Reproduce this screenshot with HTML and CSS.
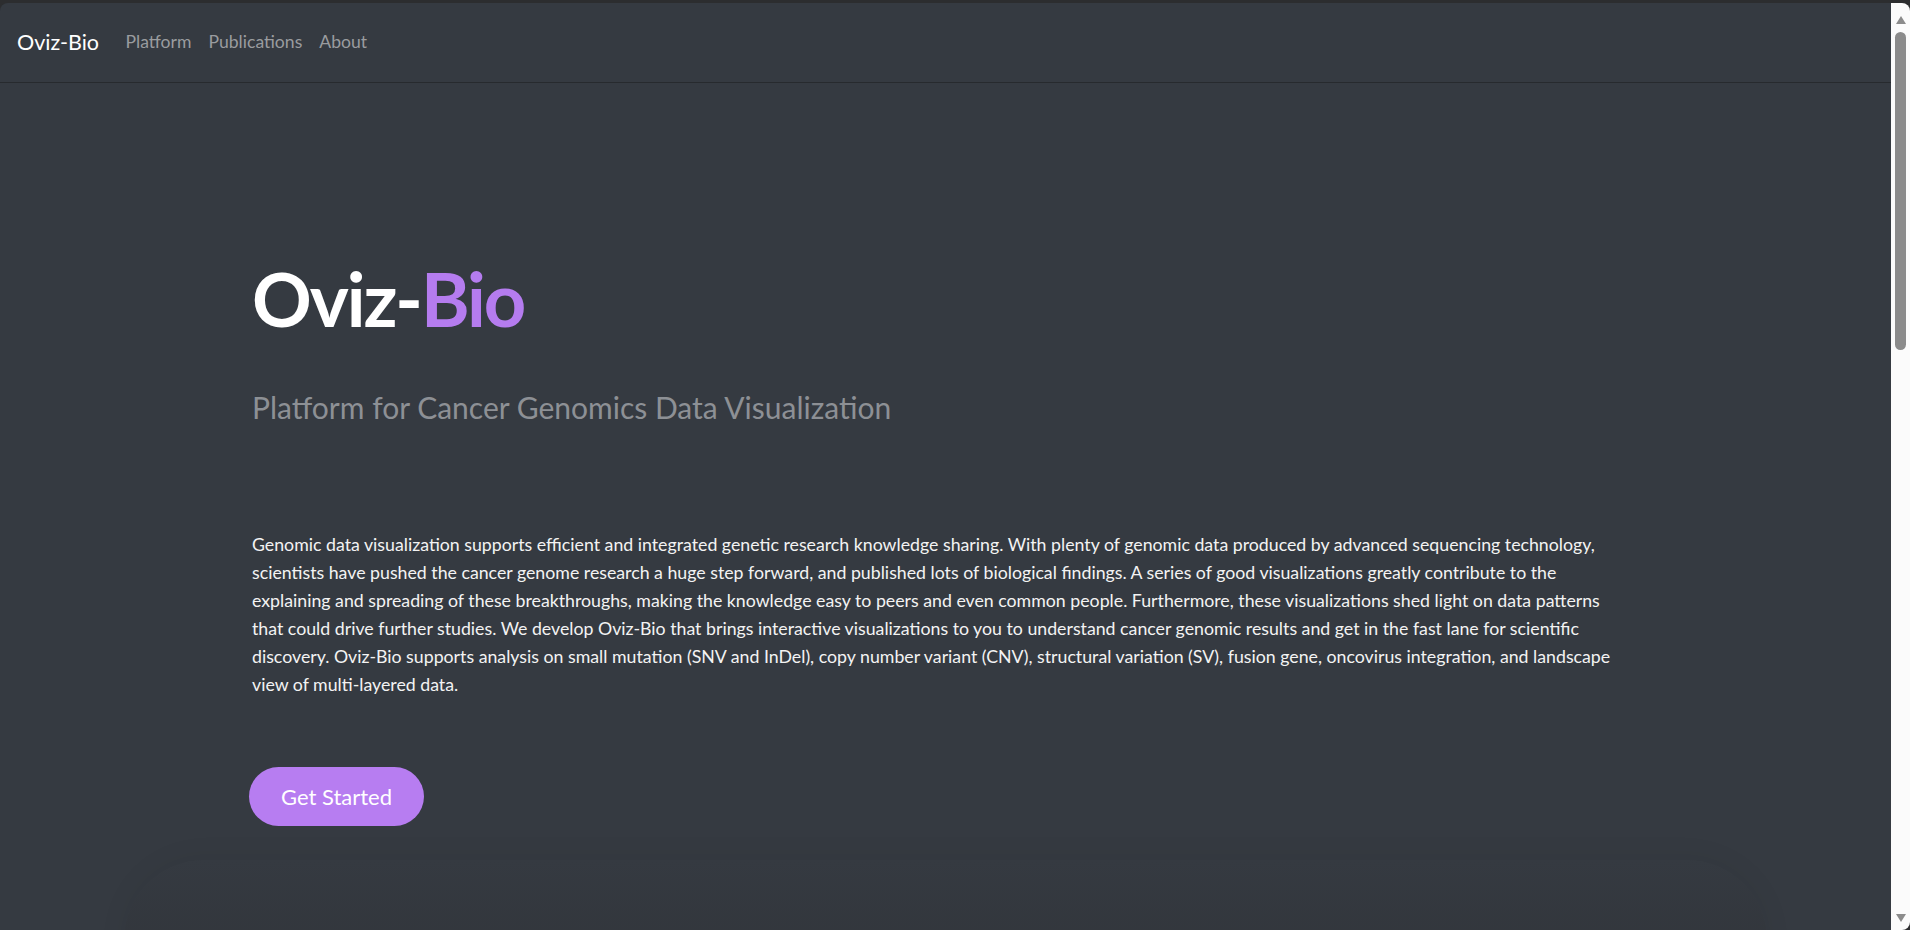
FILE: index.html
```html
<!DOCTYPE html>
<html lang="en">
<head>
<meta charset="utf-8">
<title>Oviz-Bio</title>
<link rel="stylesheet" href="styles.css">
</head>
<body>
<div class="window">
  <div class="main">
    <nav class="navbar">
      <a class="brand" href="#">Oviz-Bio</a>
      <ul class="nav-links">
        <li><a href="#">Platform</a></li>
        <li><a href="#">Publications</a></li>
        <li><a href="#">About</a></li>
      </ul>
    </nav>
    <section class="hero">
      <h1 class="hero-title">Oviz-<span class="accent">Bio</span></h1>
      <p class="hero-subtitle">Platform for Cancer Genomics Data Visualization</p>
      <p class="hero-text">Genomic data visualization supports efficient and integrated genetic research knowledge sharing. With plenty of genomic data produced by advanced sequencing technology, scientists have pushed the cancer genome research a huge step forward, and published lots of biological findings. A series of good visualizations greatly contribute to the explaining and spreading of these breakthroughs, making the knowledge easy to peers and even common people. Furthermore, these visualizations shed light on data patterns that could drive further studies. We develop Oviz-Bio that brings interactive visualizations to you to understand cancer genomic results and get in the fast lane for scientific discovery. Oviz-Bio supports analysis on small mutation (SNV and InDel), copy number variant (CNV), structural variation (SV), fusion gene, oncovirus integration, and landscape view of multi-layered data.</p>
      <a class="btn-start" href="#">Get Started</a>
    </section>
    <section class="next-card"></section>
  </div>
  <div class="scrollbar">
    <span class="arrow-up"></span>
    <span class="thumb"></span>
    <span class="track"></span>
    <span class="arrow-down"></span>
  </div>
</div>
</body>
</html>
```

FILE: styles.css
```css
* { box-sizing: border-box; }
html, body {
  margin: 0;
  padding: 0;
  height: 100%;
  overflow: hidden;
  background: #2c2d2f;
}
body {
  font-family: Lato, "Open Sans", "Liberation Sans", sans-serif;
}
.window {
  display: flex;
  height: calc(100vh - 3px);
  margin-top: 3px;
}
.main {
  flex: 1;
  background: #353a41;
  border-top-left-radius: 8px;
  overflow: hidden;
  display: flex;
  flex-direction: column;
}
.navbar {
  height: 80px;
  flex-shrink: 0;
  display: flex;
  align-items: center;
  padding: 0 0 2px 17px;
  border-bottom: 1px solid #272a2e;
}
.brand {
  color: #ffffff;
  font-size: 21.5px;
  text-decoration: none;
  margin-right: 18px;
}
.nav-links {
  display: flex;
  list-style: none;
  margin: 0;
  padding: 0;
}
.nav-links a {
  display: block;
  padding: 0 8.5px;
  color: #9a9c9f;
  font-size: 17.6px;
  text-decoration: none;
}
.hero {
  padding: 168px 0 0 252px;
  flex-shrink: 0;
  height: 777px;
}
.hero-title {
  margin: 0;
  font-size: 74px;
  line-height: 96px;
  font-weight: 700;
  color: #ffffff;
  letter-spacing: -2px;
}
.accent { color: #b57cef; }
.hero-subtitle {
  margin: 42px 0 0;
  font-size: 30px;
  line-height: 36px;
  color: #8d9095;
  font-weight: 400;
}
.hero-text {
  margin: 106px 0 0;
  max-width: 1375px;
  font-size: 17.74px;
  line-height: 27.9px;
  color: #f3f3f3;
}
.btn-start {
  display: inline-flex;
  align-items: center;
  justify-content: center;
  margin-top: 69px;
  margin-left: -3px;
  width: 175px;
  height: 59px;
  border-radius: 30px;
  background: #b77df1;
  color: #ffffff;
  font-size: 22px;
  text-decoration: none;
}
.next-card {
  flex-shrink: 0;
  height: 300px;
  margin: 0 124px;
  border-radius: 80px 80px 0 0;
  background: linear-gradient(#353a41, #32363c 90px);
  box-shadow: 0 -2px 30px rgba(0, 0, 0, 0.05);
}
.scrollbar {
  width: 19px;
  flex-shrink: 0;
  background: #fbfbfb;
  border-radius: 0 8px 8px 0;
  display: flex;
  flex-direction: column;
  align-items: center;
  padding: 10px 0 8px;
}
.arrow-up, .arrow-down {
  width: 0;
  height: 0;
  border-left: 5px solid transparent;
  border-right: 5px solid transparent;
  flex-shrink: 0;
}
.arrow-up { border-bottom: 8px solid #8b8b8b; margin-top: 3px; }
.arrow-down { border-top: 8px solid #8b8b8b; }
.thumb {
  width: 11px;
  height: 318px;
  margin-top: 8px;
  border-radius: 6px;
  background: #8b8b8b;
  flex-shrink: 0;
}
.track { flex: 1; }
```
